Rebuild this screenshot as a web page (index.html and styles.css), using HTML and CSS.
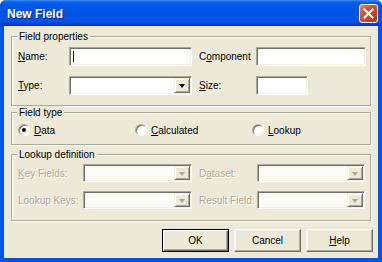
FILE: index.html
```html
<!DOCTYPE html>
<html>
<head>
<meta charset="utf-8">
<link rel="stylesheet" href="styles.css">
</head>
<body>
<div class="window">
  <div class="titlebar">
    <span class="title">New Field</span>
    <span class="close"><svg width="11" height="11" viewBox="0 0 11 11"><path d="M1.5 1.5 L9.5 9.5 M9.5 1.5 L1.5 9.5" stroke="#fff" stroke-width="2" stroke-linecap="square"/></svg></span>
  </div>
  <div class="client">
    <div class="group g-props">
      <span class="caption">Field properties</span>
      <div class="grid props">
        <span class="lbl"><u>N</u>ame:</span>
        <div class="edit"><span class="caret"></span></div>
        <span class="lbl">C<u>o</u>mponent</span>
        <div class="edit"></div>
        <span class="lbl"><u>T</u>ype:</span>
        <div class="combo"><div class="field"></div><div class="dropbtn"><span class="arrow"></span></div></div>
        <span class="lbl"><u>S</u>ize:</span>
        <div class="edit size"></div>
      </div>
    </div>
    <div class="group g-type">
      <span class="caption">Field type</span>
      <div class="radios">
        <div class="opt"><span class="radio checked"></span><span><u>D</u>ata</span></div>
        <div class="opt"><span class="radio"></span><span><u>C</u>alculated</span></div>
        <div class="opt"><span class="radio"></span><span><u>L</u>ookup</span></div>
      </div>
    </div>
    <div class="group g-lookup">
      <span class="caption">Lookup definition</span>
      <div class="grid lookup">
        <span class="lbl dis"><u>K</u>ey Fields:</span>
        <div class="combo disabled"><div class="field"></div><div class="dropbtn"><span class="arrow"></span></div></div>
        <span class="lbl dis">D<u>a</u>taset:</span>
        <div class="combo disabled"><div class="field"></div><div class="dropbtn"><span class="arrow"></span></div></div>
        <span class="lbl dis">Lookup Keys:</span>
        <div class="combo disabled"><div class="field"></div><div class="dropbtn"><span class="arrow"></span></div></div>
        <span class="lbl dis">Result Field:</span>
        <div class="combo disabled"><div class="field"></div><div class="dropbtn"><span class="arrow"></span></div></div>
      </div>
    </div>
    <div class="buttons">
      <div class="btn default">OK</div>
      <div class="btn">Cancel</div>
      <div class="btn"><u>H</u>elp</div>
    </div>
  </div>
</div>
</body>
</html>
```
FILE: styles.css
```css
html, body {
  margin: 0;
  padding: 0;
  background: #fff;
}
.window {
  width: 382px;
  height: 262px;
  box-sizing: border-box;
  display: flex;
  flex-direction: column;
  font-family: "Liberation Sans", Arial, sans-serif;
  font-size: 10px;
  color: #000;
  border-radius: 6px 6px 0 0;
  overflow: hidden;
  background: #0054E3;
}
.titlebar {
  height: 26px;
  flex: none;
  display: flex;
  align-items: center;
  justify-content: space-between;
  padding: 0 4px 0 7px;
  background: linear-gradient(#3D8AF7 0, #0A62EC 2px, #0057E6 5px, #0054E3 16px, #0058E8 20px, #0550DD 22px, #0840C8 24px, #0535B8 26px);
}
.title {
  color: #fff;
  font-family: "Liberation Sans", sans-serif;
  font-weight: bold;
  font-size: 12px;
  text-shadow: 1px 1px 0 #0A1E8C;
  margin-top: 1px;
}
.close {
  width: 19px;
  height: 19px;
  box-sizing: border-box;
  border: 1px solid #fff;
  border-radius: 3px;
  background: linear-gradient(135deg, #E8876A 0%, #DA5131 35%, #CF3F1E 70%, #B8320F 100%);
  display: flex;
  align-items: center;
  justify-content: center;
  margin-top: 1px;
}
.client {
  flex: 1;
  margin: 0 4px 4px 4px;
  background: #ECE9D8;
  display: flex;
  flex-direction: column;
  padding-top: 10px;
}
.group {
  margin: 0 7px 0 7px;
  border: 1px solid #ACA899;
  box-shadow: 1px 1px 0 #fff, inset 1px 1px 0 #fff;
  display: flex;
  flex-direction: column;
  padding: 0 6px;
}
.caption {
  align-self: flex-start;
  margin: -7px 0 0 -1px;
  padding: 0 2px;
  line-height: 13px;
  background: #ECE9D8;
}
.g-props { padding-bottom: 10px; }
.g-type { margin-top: 6px; padding-bottom: 7px; }
.g-lookup { margin-top: 9px; padding-bottom: 11px; }

.grid {
  display: grid;
  align-items: center;
}
.props {
  margin-top: 4px;
  grid-template-columns: 51px 123px 64px 110px;
  grid-template-rows: 19px 19px;
  row-gap: 10px;
}
.props > :nth-child(3), .props > :nth-child(7) { margin-left: 7px; }
.lookup {
  margin-top: 3px;
  grid-template-columns: 65px 109px 65px 108px;
  grid-template-rows: 18px 18px;
  row-gap: 9px;
}
.lookup > :nth-child(3), .lookup > :nth-child(7) { margin-left: 7px; }
.lbl { white-space: nowrap; }
.lbl.dis {
  color: #ACA899;
  text-shadow: 1px 1px 0 #fff;
}
.edit {
  height: 100%;
  box-sizing: border-box;
  background: #fff;
  border: 1px solid;
  border-color: #ACA899 #fff #fff #ACA899;
  box-shadow: inset 1px 1px 0 #716F64, inset -1px -1px 0 #F1EFE2;
  display: flex;
  align-items: center;
  padding-left: 2px;
}
.edit.size { width: 52px; }
.caret {
  width: 1px;
  height: 11px;
  background: #000;
  margin-left: 1px;
}
.combo {
  height: 100%;
  box-sizing: border-box;
  background: #fff;
  border: 1px solid;
  border-color: #ACA899 #fff #fff #ACA899;
  box-shadow: inset 1px 1px 0 #716F64, inset -1px -1px 0 #F1EFE2;
  display: flex;
  padding: 1px;
}
.combo.disabled { background: #FBFBF8; }
.combo .field { flex: 1; }
.dropbtn {
  width: 16px;
  box-sizing: border-box;
  background: #ECE9D8;
  border: 1px solid;
  border-color: #F1EFE2 #716F64 #716F64 #F1EFE2;
  box-shadow: inset 1px 1px 0 #fff, inset -1px -1px 0 #ACA899;
  display: flex;
  align-items: center;
  justify-content: center;
}
.arrow {
  width: 0;
  height: 0;
  border-left: 3.5px solid transparent;
  border-right: 3.5px solid transparent;
  border-top: 4px solid #000;
  margin-top: 1px;
}
.disabled .arrow { border-top-color: #ACA899; }
.radios {
  display: flex;
  margin-top: 4px;
  height: 14px;
  align-items: center;
}
.opt {
  display: flex;
  align-items: center;
  gap: 4px;
  width: 117px;
  flex: none;
}
.radio {
  width: 12px;
  height: 12px;
  box-sizing: border-box;
  border-radius: 50%;
  background: #fff;
  border: 1px solid;
  border-color: #ACA899 #fff #fff #ACA899;
  box-shadow: inset 1px 1px 0 #716F64, inset -1px -1px 0 #F1EFE2;
  display: flex;
  align-items: center;
  justify-content: center;
}
.radio.checked::after {
  content: "";
  width: 4px;
  height: 4px;
  border-radius: 50%;
  background: #000;
}
.buttons {
  margin-top: 8px;
  display: flex;
  justify-content: flex-end;
  gap: 5px;
  padding-right: 5px;
}
.btn {
  width: 67px;
  height: 23px;
  box-sizing: border-box;
  background: #ECE9D8;
  border: 1px solid;
  border-color: #fff #716F64 #716F64 #fff;
  box-shadow: inset -1px -1px 0 #ACA899, inset 1px 1px 0 #F1EFE2;
  display: flex;
  align-items: center;
  justify-content: center;
}
.btn.default {
  border: 1px solid #000;
  box-shadow: inset 1px 1px 0 #fff, inset -1px -1px 0 #716F64, inset -2px -2px 0 #ACA899;
}
```
